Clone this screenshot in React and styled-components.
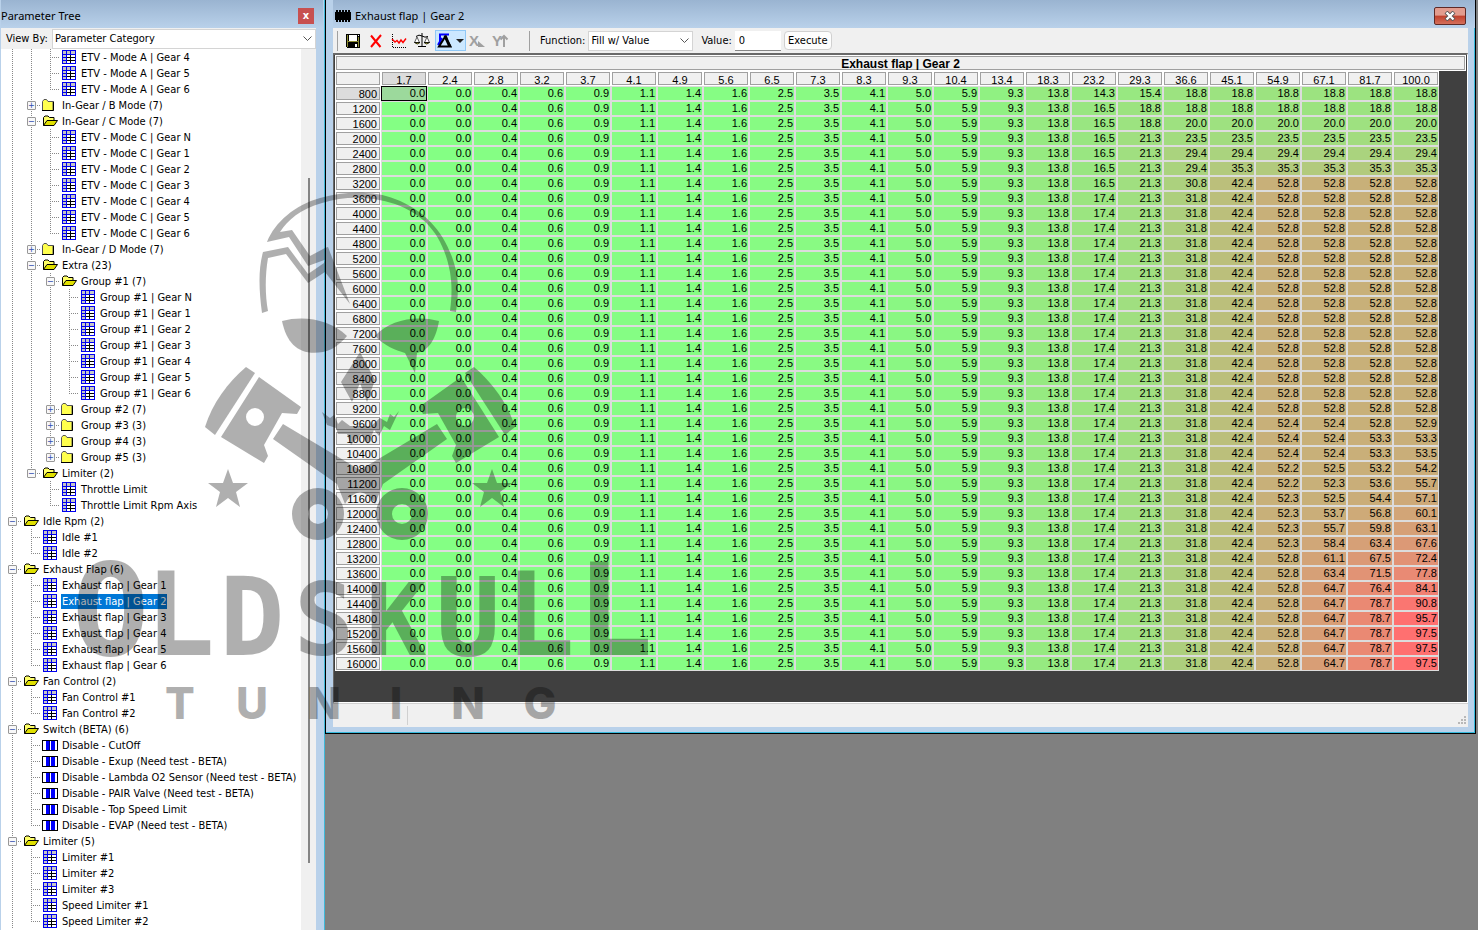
import React, { useState } from "react";
import styled, { createGlobalStyle } from "styled-components";

const COOL = [132, 255, 132];
const HOT = [255, 112, 112];

const columns = [
  "1.7", "2.4", "2.8", "3.2", "3.7", "4.1", "4.9", "5.6", "6.5", "7.3", "8.3", "9.3",
  "10.4", "13.4", "18.3", "23.2", "29.3", "36.6", "45.1", "54.9", "67.1", "81.7", "100.0",
];

// the low throttle columns hold the same values for every rpm
const base = "0.0 0.0 0.4 0.6 0.9 1.1 1.4 1.6 2.5 3.5 4.1 5.0 5.9 9.3 13.8".split(" ");

const flat = "17.4 21.3 31.8 42.4 52.8 52.8 52.8 52.8";

const tails = {
  800: "14.3 15.4 18.8 18.8 18.8 18.8 18.8 18.8",
  1200: "16.5 18.8 18.8 18.8 18.8 18.8 18.8 18.8",
  1600: "16.5 18.8 20.0 20.0 20.0 20.0 20.0 20.0",
  2000: "16.5 21.3 23.5 23.5 23.5 23.5 23.5 23.5",
  2400: "16.5 21.3 29.4 29.4 29.4 29.4 29.4 29.4",
  2800: "16.5 21.3 29.4 35.3 35.3 35.3 35.3 35.3",
  3200: "16.5 21.3 30.8 42.4 52.8 52.8 52.8 52.8",
  9600: "17.4 21.3 31.8 42.4 52.4 52.4 52.8 52.9",
  10000: "17.4 21.3 31.8 42.4 52.4 52.4 53.3 53.3",
  10400: "17.4 21.3 31.8 42.4 52.4 52.4 53.3 53.5",
  10800: "17.4 21.3 31.8 42.4 52.2 52.5 53.2 54.2",
  11200: "17.4 21.3 31.8 42.4 52.2 52.3 53.6 55.7",
  11600: "17.4 21.3 31.8 42.4 52.3 52.5 54.4 57.1",
  12000: "17.4 21.3 31.8 42.4 52.3 53.7 56.8 60.1",
  12400: "17.4 21.3 31.8 42.4 52.3 55.7 59.8 63.1",
  12800: "17.4 21.3 31.8 42.4 52.3 58.4 63.4 67.6",
  13200: "17.4 21.3 31.8 42.4 52.8 61.1 67.5 72.4",
  13600: "17.4 21.3 31.8 42.4 52.8 63.4 71.5 77.8",
  14000: "17.4 21.3 31.8 42.4 52.8 64.7 76.4 84.1",
  14400: "17.4 21.3 31.8 42.4 52.8 64.7 78.7 90.8",
  14800: "17.4 21.3 31.8 42.4 52.8 64.7 78.7 95.7",
  15200: "17.4 21.3 31.8 42.4 52.8 64.7 78.7 97.5",
  15600: "17.4 21.3 31.8 42.4 52.8 64.7 78.7 97.5",
  16000: "17.4 21.3 31.8 42.4 52.8 64.7 78.7 97.5",
};

const rows = Array.from({ length: 39 }, (_, i) => {
  const rpm = 800 + i * 400;
  return { rpm, values: [...base, ...(tails[rpm] || flat).split(" ")] };
});

function heat(value) {
  const t = Math.min(value / 95, 1);
  const mix = COOL.map((c, i) => Math.round(c + (HOT[i] - c) * t));
  return `rgb(${mix.join(",")})`;
}

const gears = (prefix, names) => names.map((n) => ({ label: `${prefix} | Gear ${n}` }));

const tree = [
  {
    label: "ETV",
    hidden: true,
    open: true,
    children: [
      {
        label: "In-Gear / A Mode (7)",
        hidden: true,
        open: true,
        children: gears("ETV - Mode A", [4, 5, 6]),
      },
      { label: "In-Gear / B Mode (7)", children: [] },
      {
        label: "In-Gear / C Mode (7)",
        open: true,
        children: gears("ETV - Mode C", ["N", 1, 2, 3, 4, 5, 6]),
      },
      { label: "In-Gear / D Mode (7)", children: [] },
      {
        label: "Extra (23)",
        open: true,
        children: [
          {
            label: "Group #1 (7)",
            open: true,
            children: gears("Group #1", ["N", 1, 2, 3, 4, 5, 6]),
          },
          { label: "Group #2 (7)", children: [] },
          { label: "Group #3 (3)", children: [] },
          { label: "Group #4 (3)", children: [] },
          { label: "Group #5 (3)", children: [] },
        ],
      },
      {
        label: "Limiter (2)",
        open: true,
        children: [{ label: "Throttle Limit" }, { label: "Throttle Limit Rpm Axis" }],
      },
    ],
  },
  { label: "Idle Rpm (2)", open: true, children: [{ label: "Idle #1" }, { label: "Idle #2" }] },
  { label: "Exhaust Flap (6)", open: true, children: gears("Exhaust flap", [1, 2, 3, 4, 5, 6]) },
  {
    label: "Fan Control (2)",
    open: true,
    children: [{ label: "Fan Control #1" }, { label: "Fan Control #2" }],
  },
  {
    label: "Switch (BETA) (6)",
    open: true,
    children: [
      "CutOff",
      "Exup (Need test - BETA)",
      "Lambda O2 Sensor (Need test - BETA)",
      "PAIR Valve (Need test - BETA)",
      "Top Speed Limit",
      "EVAP (Need test - BETA)",
    ].map((n) => ({ label: `Disable - ${n}`, toggle: true })),
  },
  {
    label: "Limiter (5)",
    open: true,
    more: true,
    children: [
      { label: "Limiter #1" },
      { label: "Limiter #2" },
      { label: "Limiter #3" },
      { label: "Speed Limiter #1" },
      { label: "Speed Limiter #2" },
    ],
  },
];

// one entry per visible line; guides says which parent lines run through it
function flatten(nodes, guides = []) {
  return nodes.flatMap((node, i) => {
    const last = i === nodes.length - 1 && !node.more;
    const self = node.hidden ? [] : [{ ...node, guides, last }];
    const kids = node.open ? flatten(node.children, [...guides, !last]) : [];
    return [...self, ...kids];
  });
}

const lines = flatten(tree);

function FolderIcon({ open }) {
  if (open) {
    return (
      <svg width="17" height="12" viewBox="0 0 17 12">
        <path d="M1.5 10.5V2.5L3 1h3l1.500 1.500h4.500v3" fill="#ffff66" stroke="#000" />
        <path d="M1.500 10.500L5 5.500h10.500L12 10.500z" fill="#e0e000" stroke="#000" />
      </svg>
    );
  }
  return (
    <svg width="12" height="12" viewBox="0 0 12 12">
      <path d="M0.500 11.500V2.500L2 0.500h2.500l1.500 2h5v9z" fill="#ffff4d" stroke="#555" />
      <path d="M0 11.500h11.500V2.500" fill="none" stroke="#000" />
    </svg>
  );
}

function TableIcon() {
  return (
    <svg width="14" height="14" viewBox="0 0 14 14" shapeRendering="crispEdges">
      <path d="M0 0h14v14H0z" fill="#fff" />
      <path d="M1 1h12v3H1zM1 4h3v9H1z" fill="#c6c6c6" />
      <path d="M4 7h9v1H4zM4 10h9v1H4zM8 4h1v9H8zM4 4h1v9H4z" fill="#000" />
      <path
        d="M0 0h14v14H0zM1 1v12h12V1z M4 1h1v3H4zM8 1h1v3H8zM1 4h12v1H1zM1 7h3v1H1zM1 10h3v1H1zM4 5h1v8H4z"
        fill="#0000f0"
        fillRule="evenodd"
      />
    </svg>
  );
}

function ToggleIcon() {
  return (
    <svg width="16" height="11" viewBox="0 0 16 11" shapeRendering="crispEdges">
      <path d="M0 0h16v11H0z" fill="#000" />
      <path d="M1 1h14v9H1z" fill="#fff" />
      <path d="M4 1h3v9H4zM9 1h4v9H9z" fill="#0000ff" />
      <path d="M7 1h1v9H7z" fill="#000080" />
    </svg>
  );
}

function ChipIcon() {
  return (
    <svg width="16" height="12" viewBox="0 0 16 12" shapeRendering="crispEdges">
      <path
        d="M0 2h16v8H0zM1 0h2v12H1zM4 0h2v12H4zM7 0h2v12H7zM10 0h2v12h-2zM13 0h2v12h-2z"
        fill="#000"
      />
    </svg>
  );
}

function SaveIcon() {
  return (
    <svg width="14" height="14" viewBox="0 0 14 14" shapeRendering="crispEdges">
      <path d="M0 0h14v14H1l-1-1z" fill="#000" />
      <path d="M3 1h8v6H3z" fill="#fff" />
      <path d="M1 1h1v12H1zM12 3h1v10h-1zM2 7h10v1H2z" fill="#8a8a30" />
      <path d="M9 10h2v3H9zM12 1h1v1h-1z" fill="#fff" />
    </svg>
  );
}

function DeleteIcon() {
  return (
    <svg width="12" height="14" viewBox="0 0 12 14">
      <path d="M1 1.500L10.500 13M11 1L1 13" stroke="#ff0000" strokeWidth="2" fill="none" />
    </svg>
  );
}

function GraphIcon() {
  return (
    <svg width="16" height="14" viewBox="0 0 16 14">
      <path d="M1.500 0v13.500H15" stroke="#000" strokeDasharray="1 1" fill="none" />
      <path d="M1 5l3 3 2-1.500 2 2.500 2-3 2 2.500 3-4" stroke="#ff0000" strokeWidth="1.400" fill="none" />
    </svg>
  );
}

function ScaleIcon() {
  return (
    <svg width="16" height="15" viewBox="0 0 16 15">
      <path d="M8 0v13M4 13.500h8M2 3.500Q5 1 8 3t6 0.500" stroke="#000" fill="none" />
      <path d="M3 4L0.500 9.500h5zM13 4l-2.500 5.500h5z" stroke="#333" strokeWidth="0.800" fill="#fff" />
      <path d="M0.500 9.500h5.500q-2.700 3-5.500 0zM10 9.500h5.500q-2.700 3-5.500 0z" fill="#d8d840" stroke="#000" strokeWidth="0.800" />
    </svg>
  );
}

function DeltaIcon() {
  return (
    <svg width="15" height="15" viewBox="0 0 15 15">
      <path d="M3 11V1.500h9M1 12L5 5" stroke="#0000ff" strokeWidth="2" fill="none" />
      <path d="M2 13.500h11.500L8 4z" fill="none" stroke="#000" strokeWidth="2" />
      <path d="M8 2.500l4.500 10.500" stroke="#000" strokeWidth="3" />
    </svg>
  );
}

function AxisIcon({ letter }) {
  return (
    <svg width="17" height="16" viewBox="0 0 17 16">
      <AxisLetter x="0" y="13">
        {letter}
      </AxisLetter>
      {letter === "X" ? (
        <path d="M9 14V8l7 6z" fill="#a0a0a0" />
      ) : (
        <path d="M12 14V3M8.500 6.500L12 3l3.500 3.500" stroke="#a0a0a0" strokeWidth="2" fill="none" />
      )}
    </svg>
  );
}

function Chevron() {
  return (
    <ChevronSvg width="9" height="5" viewBox="0 0 9 5">
      <path d="M0.500 0.500l4 4 4-4" fill="none" stroke="#555" />
    </ChevronSvg>
  );
}

function Skull() {
  return (
    <svg width="312" height="354" viewBox="204 190 312 354">
      <path d="M267 242C275 222 295 205 320 198C345 191 375 191 395 199C430 212 450 240 457 275C459 290 457 305 456 312L450 311C452 295 452 285 450 272C443 235 425 215 395 204C370 196 345 196 322 203C300 209 288 220 280 232L292 230L310 256L325 248L328 247L327 259L308 266L289 237Z" />
      <path d="M263 252L288 247L308 274L324 263L328 247L350 304L325 272L308 283L286 254L268 258C265 275 265 295 268 311L262 313C259 290 258 270 263 252Z" />
      <path d="M282 321C305 315 330 320 347 336C340 344 333 350 323 352C300 356 287 345 282 321Z" />
      <path d="M439 321C415 315 390 320 375 336C385 346 395 350 405 353L415 373L417 353C430 350 436 338 439 321Z" />
      <path d="M360 352L375 380L367 402L360 383L352 402L341 382Z" />
      <path d="M322 412L330 418L334 415L338 424L342 420L350 426H371L380 418L387 422L390 414L394 417L399 411L390 430L384 426L379 436L374 430L368 444L361 434L351 445L347 434L338 434L336 428L327 425Z" />
      <g id="piston">
        <path d="M246 367L255 373L215 435L205 427C212 404 228 382 246 367Z" />
        <path
          d="M259 377L301 407L297 414L282 413L264 445L268 456L264 463L221 437ZM246 417a9 9 0 1 0 18 0a9 9 0 1 0 -18 0Z"
          fillRule="evenodd"
        />
        <path d="M283 424L360 470V492Q350 494 345 504L337 484L273 439Z" />
        <path
          d="M292 514a26 26 0 1 0 52 0a26 26 0 1 0 -52 0ZM308 514a10 10 0 1 1 20 0a10 10 0 1 1 -20 0Z"
          fillRule="evenodd"
        />
        <path d="M228 469L233 483L248 483L236 492L240 507L228 498L216 507L220 492L208 483L223 483Z" />
      </g>
      <use href="#piston" transform="translate(720 0) scale(-1 1)" />
    </svg>
  );
}

function Watermark() {
  const brand = [["O", 128], ["L", 116], ["D", 108], ["S", 100], ["K", 100], ["U", 108], ["L", 116], ["L", 128]];
  return (
    <Mark>
      <Skull />
      <Brand>
        {brand.map(([letter, size], i) => (
          <BrandLetter key={i} $size={size}>
            {letter}
          </BrandLetter>
        ))}
      </Brand>
      <Tuning>
        {"TUNING".split("").map((letter, i) => (
          <span key={i}>{letter}</span>
        ))}
      </Tuning>
    </Mark>
  );
}

function TreeLine({ node, selected, onSelect }) {
  const folder = Boolean(node.children);
  return (
    <Line>
      {node.guides.map((on, i) => (
        <Guide key={i} $on={on} />
      ))}
      <Branch $last={node.last}>
        {folder && <Expander aria-label={node.label}>{node.open ? "−" : "+"}</Expander>}
      </Branch>
      <NodeIcon $pull={folder || node.toggle}>
        {folder ? <FolderIcon open={node.open} /> : node.toggle ? <ToggleIcon /> : <TableIcon />}
      </NodeIcon>
      <NodeLabel $selected={selected} onClick={() => onSelect(node.label)}>
        {node.label}
      </NodeLabel>
    </Line>
  );
}

function ParameterTree() {
  const [selected, setSelected] = useState("Exhaust flap | Gear 2");

  return (
    <Panel>
      <TitleBar>
        <TitleText>Parameter Tree</TitleText>
        <PanelClose aria-label="Close panel">x</PanelClose>
      </TitleBar>
      <ViewBy>
        <label htmlFor="viewby">View By:</label>
        <SelectBox $grow>
          <select id="viewby">
            <option>Parameter Category</option>
          </select>
          <Chevron />
        </SelectBox>
      </ViewBy>
      <TreeBody>
        <TreeList>
          {lines.map((node, i) => (
            <TreeLine
              key={i}
              node={node}
              selected={node.label === selected}
              onSelect={setSelected}
            />
          ))}
        </TreeList>
        <ScrollTrack>
          <ScrollThumb />
        </ScrollTrack>
      </TreeBody>
    </Panel>
  );
}

function MapWindow() {
  return (
    <Window>
      <TitleBar $indent>
        <ChipIcon />
        <TitleText $chip>Exhaust flap | Gear 2</TitleText>
        <WindowClose aria-label="Close window">
          <svg width="12" height="10" viewBox="0 0 12 10">
            <path d="M2 1l8 8M10 1L2 9" stroke="#555" strokeWidth="4" />
            <path d="M2.500 1.500l7 7M9.500 1.500l-7 7" stroke="#fff" strokeWidth="2.400" />
          </svg>
        </WindowClose>
      </TitleBar>
      <Client>
        <Toolbar>
          <Grip />
          <Tool aria-label="Save"><SaveIcon /></Tool>
          <Tool aria-label="Delete"><DeleteIcon /></Tool>
          <Tool aria-label="Graph"><GraphIcon /></Tool>
          <Tool aria-label="Compare"><ScaleIcon /></Tool>
          <Tool $active aria-label="Delta">
            <DeltaIcon />
            <Caret />
          </Tool>
          <Tool aria-label="X axis"><AxisIcon letter="X" /></Tool>
          <Tool aria-label="Y axis"><AxisIcon letter="Y" /></Tool>
          <Grip $right />
          <FieldLabel htmlFor="fn">Function:</FieldLabel>
          <SelectBox>
            <select id="fn">
              <option>Fill w/ Value</option>
            </select>
            <Chevron />
          </SelectBox>
          <FieldLabel $spaced htmlFor="val">Value:</FieldLabel>
          <ValueInput id="val" defaultValue="0" />
          <Execute>Execute</Execute>
        </Toolbar>
        <MapArea>
          <MapTitle>Exhaust flap | Gear 2</MapTitle>
          <MapTable>
            <thead>
              <tr>
                <HeadCell as="td" />
                {columns.map((c, i) => (
                  <HeadCell key={c} scope="col" $on={i === 0}>
                    {c}
                  </HeadCell>
                ))}
              </tr>
            </thead>
            <tbody>
              {rows.map((row, r) => (
                <tr key={row.rpm}>
                  <RowHead scope="row" $on={r === 0}>
                    {row.rpm}
                  </RowHead>
                  {row.values.map((v, c) => (
                    <Cell key={c} $active={r === 0 && c === 0} style={{ backgroundColor: heat(Number(v)) }}>
                      {v}
                    </Cell>
                  ))}
                </tr>
              ))}
            </tbody>
          </MapTable>
        </MapArea>
        <StatusBar>
          <StatusCell />
          <svg width="9" height="9" viewBox="0 0 9 9" shapeRendering="crispEdges">
            <path d="M6 0h2v2H6zM6 3h2v2H6zM3 3h2v2H3zM6 6h2v2H6zM3 6h2v2H3zM0 6h2v2H0z" fill="#b8b8b8" />
          </svg>
        </StatusBar>
      </Client>
    </Window>
  );
}

function App() {
  return (
    <Page>
      <GlobalStyle />
      <ParameterTree />
      <Workspace>
        <MapWindow />
      </Workspace>
      <Watermark />
    </Page>
  );
}

export default App;

const GlobalStyle = createGlobalStyle`
  * {
    box-sizing: border-box;
  }

  body {
    margin: 0;
    overflow: hidden;
    font-family: "DejaVu Sans Condensed", "Open Sans", sans-serif;
    font-size: 11px;
    color: #000;
  }

  button,
  input,
  select {
    font: inherit;
    color: inherit;
    margin: 0;
    padding: 0;
    border: 0;
    background: none;
  }

  svg {
    display: block;
    flex: none;
  }
`;

const Page = styled.div`
  position: relative;
  display: flex;
  height: 100vh;
  overflow: hidden;
  background: #808080;
`;

const Panel = styled.aside`
  display: flex;
  flex-direction: column;
  flex: none;
  width: 325px;
  padding: 0 8px 0 1px;
  background: #b9d1ea;
  border-right: 1px solid #3fb8d8;
`;

const TitleBar = styled.header`
  display: flex;
  align-items: center;
  flex: none;
  height: 28px;
  margin-right: -7px;
  padding: 4px 9px 0 ${(props) => (props.$indent ? "2px" : "0")};
  background: linear-gradient(#9ab4d1, #b9d1ea);
`;

const TitleText = styled.h1`
  flex: 1;
  margin: 0;
  padding-left: ${(props) => (props.$chip ? "4px" : "0")};
  font: 11px "Noto Sans", sans-serif;
  line-height: 20px;
`;

const PanelClose = styled.button`
  width: 16px;
  height: 16px;
  background: #c75050;
  color: #fff;
  font-weight: 700;
  line-height: 12px;
`;

const ViewBy = styled.div`
  display: flex;
  align-items: center;
  flex: none;
  height: 21px;
  background: #f0f0f0;

  label {
    width: 51px;
    padding-left: 5px;
  }
`;

const SelectBox = styled.div`
  display: grid;
  align-items: center;
  flex: ${(props) => (props.$grow ? "1" : "none")};
  width: ${(props) => (props.$grow ? "auto" : "105px")};
  height: 20px;
  background: #fff;
  border: 1px solid #d4d4d4;

  select {
    grid-area: 1 / 1;
    width: 100%;
    height: 18px;
    padding-left: 2px;
    appearance: none;
  }
`;

const ChevronSvg = styled.svg`
  grid-area: 1 / 1;
  justify-self: end;
  margin-right: 3px;
  pointer-events: none;
`;

const TreeBody = styled.div`
  display: flex;
  flex: 1;
  min-height: 0;
  background: #fff;
`;

const TreeList = styled.ul`
  flex: 1;
  margin: 0;
  padding: 0 0 0 2px;
  list-style: none;
`;

const Line = styled.li`
  display: flex;
  align-items: center;
  height: 16px;
  white-space: nowrap;
`;

const Guide = styled.span`
  align-self: stretch;
  width: 19px;
  background: ${(props) =>
    props.$on ? "repeating-linear-gradient(#888 0 1px, #fff 1px 2px) 9px 0 / 1px 100% no-repeat" : "none"};
`;

const Branch = styled.span`
  display: flex;
  align-items: center;
  justify-content: center;
  align-self: stretch;
  width: 19px;
  background:
    repeating-linear-gradient(#888 0 1px, #fff 1px 2px) 9px 0 / 1px ${(props) => (props.$last ? "8px" : "100%")} no-repeat,
    repeating-linear-gradient(90deg, #888 0 1px, #fff 1px 2px) 9px 8px / 10px 1px no-repeat;
`;

const Expander = styled.button`
  display: flex;
  align-items: center;
  justify-content: center;
  width: 9px;
  height: 9px;
  background: #f8f8f8;
  border: 1px solid #989898;
  border-radius: 1px;
  color: #3050b0;
  font-size: 9px;
  line-height: 7px;
`;

const NodeIcon = styled.span`
  display: flex;
  width: 19px;
  padding-left: ${(props) => (props.$pull ? "1px" : "2px")};
`;

const NodeLabel = styled.button`
  height: 15px;
  margin-left: 1px;
  padding: 0 1px;
  line-height: 15px;
  background: ${(props) => (props.$selected ? "#0078d7" : "none")};
  color: ${(props) => (props.$selected ? "#fff" : "#000")};
`;

const ScrollTrack = styled.div`
  display: flex;
  justify-content: center;
  width: 15px;
  padding: 129px 0 67px;
  background: #f0f0f0;
`;

const ScrollThumb = styled.div`
  width: 2px;
  background: #858585;
`;

const Workspace = styled.main`
  flex: 1;
  min-width: 0;
  padding-right: 2px;
`;

const Window = styled.section`
  padding: 0 7px 6px;
  background: #b9d1ea;
  border: 1px solid #000;
  border-top: 0;
  box-shadow: inset -1px -1px 0 #35b9dc;
`;

const WindowClose = styled.button`
  display: flex;
  align-items: center;
  justify-content: center;
  width: 32px;
  height: 18px;
  background: linear-gradient(#e29c8e 0 45%, #c0402c 50%, #d4705c);
  border: 1px solid #5e2a26;
  border-radius: 2px;
`;

const Client = styled.div`
  background: #f0f0f0;
`;

const Toolbar = styled.div`
  display: flex;
  align-items: center;
  height: 25px;
`;

const Grip = styled.span`
  width: 1px;
  height: 20px;
  margin-left: ${(props) => (props.$right ? "17px" : "4px")};
  margin-right: ${(props) => (props.$right ? "10px" : "3px")};
  background: #a0a0a0;
`;

const Tool = styled.button`
  display: flex;
  align-items: center;
  justify-content: center;
  gap: 4px;
  width: ${(props) => (props.$active ? "31px" : "23px")};
  height: 21px;
  margin-left: ${(props) => (props.$active ? "2px" : "0")};
  border: 1px solid ${(props) => (props.$active ? "#90c8f6" : "transparent")};
  background: ${(props) => (props.$active ? "#cce8ff" : "none")};
`;

const Caret = styled.span`
  border: 4px solid transparent;
  border-top-color: #222;
  border-bottom: 0;
`;

const AxisLetter = styled.text`
  font: bold 15px "Liberation Sans", sans-serif;
  fill: #a0a0a0;
`;

const FieldLabel = styled.label`
  margin-left: ${(props) => (props.$spaced ? "8px" : "0")};
  margin-right: 3px;
`;

const ValueInput = styled.input`
  width: 46px;
  height: 20px;
  margin-right: 3px;
  padding-left: 4px;
  background: #fff;
  border-bottom: 1px solid #868686;
`;

const Execute = styled.button`
  width: 48px;
  height: 19px;
  background: #fdfdfd;
  border: 1px solid #d0d0d0;
  border-radius: 4px;
`;

const MapArea = styled.div`
  padding: 0 1px 31px;
  background: #404040;
  border-top: 2px solid #696969;
  border-left: 1px solid #696969;
  border-bottom: 1px solid #fff;
  border-right: 1px solid #fff;
`;

const MapTitle = styled.h2`
  height: 16px;
  margin: 0;
  background: #f0f0f0;
  border: 1px solid #fff;
  box-shadow: inset 0 0 0 1px #a0a0a0;
  font: bold 12px "Liberation Sans", sans-serif;
  line-height: 17px;
  text-align: center;
  overflow: hidden;
`;

const MapTable = styled.table`
  width: 1104px;
  table-layout: fixed;
  border-collapse: separate;
  border-spacing: 0;
  font-family: "Liberation Sans", sans-serif;
  font-size: 11px;
  line-height: 13px;

  th,
  td {
    height: 15px;
    padding: 0 1px;
    font-weight: 400;
    text-align: right;
  }
`;

const HeadCell = styled.th`
  background: ${(props) => (props.$on ? "#dcdcdc" : "#f0f0f0")};
  border: 1px solid #fff;
  box-shadow: inset 0 0 0 1px #a0a0a0;

  ${MapTable} & {
    padding-top: 3px;
    line-height: 10px;
    text-align: center;
  }
`;

const RowHead = styled.th`
  background: ${(props) => (props.$on ? "#dcdcdc" : "#f0f0f0")};
  border: 1px solid #fff;
  box-shadow: inset 0 0 0 1px #a0a0a0;

  ${MapTable} & {
    padding: 1px 3px 0 0;
    line-height: 12px;
  }
`;

const Cell = styled.td`
  border: 1px solid ${(props) => (props.$active ? "#000" : "#dcdcdc")};
  box-shadow: ${(props) => (props.$active ? "inset 0 0 0 20px rgba(192, 160, 192, 0.4)" : "none")};
`;

const StatusBar = styled.footer`
  display: flex;
  align-items: flex-end;
  justify-content: space-between;
  height: 24px;
  padding: 2px 1px;
  border-top: 1px solid #d0d0d0;
`;

const StatusCell = styled.span`
  align-self: stretch;
  width: 74px;
  border-right: 1px solid #d0d0d0;
`;

const Mark = styled.div`
  position: absolute;
  top: 190px;
  left: 72px;
  display: flex;
  flex-direction: column;
  align-items: center;
  width: 576px;
  opacity: 0.31;
  pointer-events: none;
`;

const Brand = styled.div`
  display: grid;
  grid-template-columns: repeat(8, 72px);
  align-items: baseline;
  height: 112px;
  margin-top: 12px;
  line-height: 110px;
`;

const BrandLetter = styled.span`
  font-family: "DejaVu Sans Mono", monospace;
  font-weight: 700;
  font-size: ${(props) => props.$size}px;
  text-align: center;
`;

const Tuning = styled.div`
  display: grid;
  grid-template-columns: repeat(6, 72px);
  margin-top: 8px;
  font: 800 44px Inter, sans-serif;
  line-height: 54px;
  text-align: center;
`;
